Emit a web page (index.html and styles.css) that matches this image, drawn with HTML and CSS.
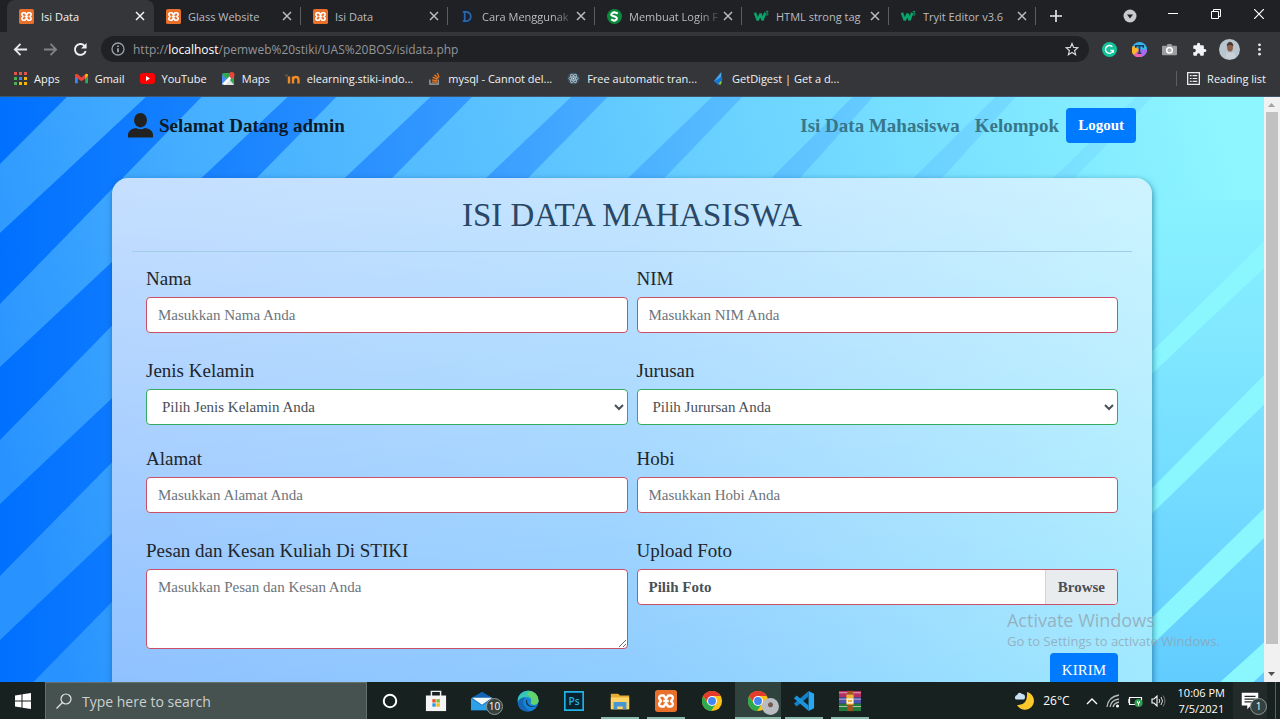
FILE: index.html
```html
<!DOCTYPE html>
<html lang="id">
<head>
<meta charset="utf-8">
<meta name="viewport" content="width=device-width, initial-scale=1">
<title>Isi Data</title>
<link rel="stylesheet" href="styles.css">
</head>
<body>
<svg class="defs" width="0" height="0" aria-hidden="true">
  <symbol id="xampp" viewBox="0 0 24 24"><rect width="24" height="24" rx="3" fill="#e9702a"/><path d="M9.500 6H7a2.500 2.500 0 0 0-2 4l1.500 2L5 14a2.500 2.500 0 0 0 2 4h2.500l2.500-3.500 2.500 3.500H17a2.500 2.500 0 0 0 2-4l-1.500-2L19 10a2.500 2.500 0 0 0-2-4h-2.500L12 9.500zM9 12h6" fill="none" stroke="#fff" stroke-width="2.600" stroke-linejoin="round"/></symbol>
  <symbol id="close" viewBox="0 0 10 10"><path d="M1 1l8 8M9 1L1 9" stroke="currentColor" stroke-width="1.500"/></symbol>
  <symbol id="w3" viewBox="0 0 16 16"><path d="M1 4l3 8 3-7 2 7 3-8" fill="none" stroke="#0aa46c" stroke-width="2.600" stroke-linejoin="bevel"/><path d="M12.500 2.500h2.500l-1.500 1.700q2 0 1.500 1.800-.8 1-2.300.2" fill="none" stroke="#0aa46c"/></symbol>
  <symbol id="chrome" viewBox="0 0 24 24"><circle cx="12" cy="12" r="11" fill="#fbc116"/><path d="M2.500 6.500A11 11 0 0 0 11 23l5.500-8.500L12 12 7 14z" fill="#2da94f"/><path d="M2.500 6.500A11 11 0 0 1 21.500 6.500H12L7.500 14z" fill="#e33b2e"/><circle cx="12" cy="12" r="5.500" fill="#fff"/><circle cx="12" cy="12" r="4.300" fill="#4285f4"/></symbol>
</svg>

<header class="browser">
  <div class="tabstrip">
    <div class="tab tab-active"><svg class="fav"><use href="#xampp"/></svg><span class="tab-title">Isi Data</span><button class="tab-close" aria-label="Close tab"><svg><use href="#close"/></svg></button></div>
    <div class="tab"><svg class="fav"><use href="#xampp"/></svg><span class="tab-title">Glass Website</span><button class="tab-close" aria-label="Close tab"><svg><use href="#close"/></svg></button></div>
    <div class="tab"><svg class="fav"><use href="#xampp"/></svg><span class="tab-title">Isi Data</span><button class="tab-close" aria-label="Close tab"><svg><use href="#close"/></svg></button></div>
    <div class="tab"><svg class="fav" viewBox="0 0 16 16"><rect width="12" height="16" x="1" fill="#182233"/><path d="M3 3h3.500q5 .5 5 5t-5 5H3M5 3v10" fill="none" stroke="#2e67a8" stroke-width="1.800"/></svg><span class="tab-title tab-title-fade">Cara Menggunak</span><button class="tab-close" aria-label="Close tab"><svg><use href="#close"/></svg></button></div>
    <div class="tab"><svg class="fav" viewBox="0 0 16 16"><circle cx="8" cy="8" r="8" fill="#0b8a3c"/><path d="M11.500 5Q8 2.500 5.500 4.500t1 3l3 1q2 1.500 0 3.200T4.500 11" fill="none" stroke="#fff" stroke-width="2.200"/></svg><span class="tab-title tab-title-fade">Membuat Login F</span><button class="tab-close" aria-label="Close tab"><svg><use href="#close"/></svg></button></div>
    <div class="tab"><svg class="fav"><use href="#w3"/></svg><span class="tab-title">HTML strong tag</span><button class="tab-close" aria-label="Close tab"><svg><use href="#close"/></svg></button></div>
    <div class="tab"><svg class="fav"><use href="#w3"/></svg><span class="tab-title">Tryit Editor v3.6</span><button class="tab-close" aria-label="Close tab"><svg><use href="#close"/></svg></button></div>
    <button class="new-tab" aria-label="New tab"><svg viewBox="0 0 12 12" width="12" height="12"><path d="M6 0v12M0 6h12" stroke="#e8eaed" stroke-width="1.600"/></svg></button>
    <div class="window-controls">
      <button aria-label="Search tabs"><svg viewBox="0 0 14 14" width="14" height="14"><circle cx="7" cy="7" r="6.500" fill="#c8cace"/><path d="M4 5.500h6L7 9.500z" fill="#202124"/></svg></button>
      <button aria-label="Minimize"><svg viewBox="0 0 10 10" width="10" height="10"><path d="M0 4.500h10" stroke="#fff"/></svg></button>
      <button aria-label="Restore"><svg viewBox="0 0 10 10" width="10" height="10"><path d="M.5 2.500h7v7h-7zM2.500 2.500v-2h7v7h-2" fill="none" stroke="#fff"/></svg></button>
      <button aria-label="Close window"><svg viewBox="0 0 10 10" width="10" height="10"><path d="M0 0l10 10M10 0L0 10" stroke="#fff" stroke-width="1.200"/></svg></button>
    </div>
  </div>
  <div class="toolbar">
    <button class="tool" aria-label="Back"><svg viewBox="0 0 16 16"><path d="M15 8H3M8 2L2 8l6 6" fill="none" stroke="#e8eaed" stroke-width="1.900"/></svg></button>
    <button class="tool" aria-label="Forward"><svg viewBox="0 0 16 16"><path d="M1 8h12M8 2l6 6-6 6" fill="none" stroke="#828387" stroke-width="1.900"/></svg></button>
    <button class="tool" aria-label="Reload"><svg viewBox="0 0 16 16"><path d="M13.500 9.500A5.800 5.800 0 1 1 12.200 4" fill="none" stroke="#f0f1f3" stroke-width="2"/><path d="M14.500 1v6h-6z" fill="#f0f1f3"/></svg></button>
    <div class="omnibox">
      <svg width="14" height="14" viewBox="0 0 14 14"><circle cx="7" cy="7" r="6" fill="none" stroke="#9aa0a6" stroke-width="1.300"/><path d="M7 6.200v4M7 3.500v1.500" stroke="#b8bbc0" stroke-width="1.500"/></svg>
      <span class="url">http://<b>localhost</b>/pemweb%20stiki/UAS%20BOS/isidata.php</span>
      <svg width="14" height="14" viewBox="0 0 24 24"><path d="M12 2.500l2.800 6.800 7.200.6-5.500 4.700 1.700 7.100L12 17.900l-6.200 3.800 1.700-7.100L2 9.900l7.200-.6z" fill="none" stroke="#d5d7da" stroke-width="2"/></svg>
    </div>
    <button class="tool" aria-label="Grammar"><svg viewBox="0 0 16 16"><circle cx="8" cy="8" r="8" fill="#15c39a"/><path d="M11 5A4.200 4.200 0 1 0 12 9H9M12 8.500v3" fill="none" stroke="#fff" stroke-width="1.500"/></svg></button>
    <button class="tool" aria-label="Fonts"><svg viewBox="0 0 16 16"><circle cx="8" cy="8" r="8" fill="#35b5e9"/><path d="M8 8L1 4a8 8 0 0 0 1 10z" fill="#ffb22c"/><path d="M8 8l-6 6a8 8 0 0 0 9 1.500z" fill="#f05fb2"/><path d="M8 8l3 7.500A8 8 0 0 0 16 8z" fill="#a66cf0"/><path d="M4 6V4h8v2M8 4v8M6 12h4" fill="none" stroke="#203a5c" stroke-width="1.700"/></svg></button>
    <button class="tool" aria-label="Screenshot"><svg viewBox="0 0 16 16"><path d="M1 4h4l1-2h4l1 2h4q1 0 1 1v8q0 1-1 1H1q-1 0-1-1V5q0-1 1-1z" fill="#9c9da0"/><circle cx="8" cy="8.800" r="3" fill="#aaa" stroke="#fff" stroke-width="1.600"/></svg></button>
    <button class="tool" aria-label="Extensions"><svg viewBox="0 0 24 24"><path d="M20.500 11H19V7a2 2 0 0 0-2-2h-4V3.500a2.500 2.500 0 0 0-5 0V5H4a2 2 0 0 0-2 2v3.800h1.500a2.700 2.700 0 0 1 0 5.400H2V20c0 1.100.9 2 2 2h3.800v-1.500a2.700 2.700 0 0 1 5.400 0V22H17a2 2 0 0 0 2-2v-4h1.500a2.500 2.500 0 0 0 0-5z" fill="#f1f3f4"/></svg></button>
    <button class="tool tool-avatar" aria-label="Profile"><svg viewBox="0 0 20 20"><circle cx="10" cy="10" r="10" fill="#b9c5cf"/><ellipse cx="10.500" cy="7.500" rx="2.800" ry="4.500" fill="#8a5f4b"/><path d="M7.500 5q3-5 6 0v2q-3-3-6 0z" fill="#493733"/><path d="M7 13h8l1 5q-5 2-10 0z" fill="#c8d1d8"/></svg></button>
    <button class="tool" aria-label="Menu"><svg viewBox="0 0 16 16"><g fill="#e8eaed"><circle cx="8" cy="3" r="1.500"/><circle cx="8" cy="8" r="1.500"/><circle cx="8" cy="13" r="1.500"/></g></svg></button>
  </div>
  <nav class="bookmarks" aria-label="Bookmarks">
    <a href="#"><svg viewBox="0 0 13 13"><path d="M0 0h3v3H0zM5 0h3v3H5zM10 0h3v3h-3z" fill="#e5544b"/><path d="M0 5h3v3H0z" fill="#4caf50"/><path d="M5 5h3v3H5z" fill="#4285f4"/><path d="M10 5h3v3h-3z" fill="#f5b400"/><path d="M0 10h3v3H0z" fill="#4caf50"/><path d="M5 10h3v3H5zM10 10h3v3h-3z" fill="#f5b400"/></svg>Apps</a>
    <a href="#"><svg viewBox="0 0 14 12"><path d="M0 2v9h3V4z" fill="#4285f4"/><path d="M14 2v9h-3V4z" fill="#34a853"/><path d="M0 2q1-2 3-.5L7 5l4-3.500Q13 0 14 2v2L7 9 0 4z" fill="#ea4335"/><path d="M11 1.500Q14 0 14 3l-3 3z" fill="#fbbc04"/></svg>Gmail</a>
    <a href="#"><svg class="wide" viewBox="0 0 15 12"><rect width="15" height="11" y=".5" rx="3" fill="#f00"/><path d="M6 3.500l4 2.500-4 2.500z" fill="#fff"/></svg>YouTube</a>
    <a href="#"><svg viewBox="0 0 14 14"><rect y="1" width="13" height="13" rx="2" fill="#35a853"/><path d="M0 3l6 5-6 6z" fill="#4b8df6"/><path d="M2 14l6-6 5 6z" fill="#dfe3e7"/><path d="M0 13L10 3l2 2-9 9z" fill="#fff"/><path d="M10.500 8Q7 4 7.500 3a3 3 0 0 1 6 0q0 1.500-3 5z" fill="#e8453c"/></svg>Maps</a>
    <a href="#"><svg class="wide" viewBox="0 0 15 12"><path d="M0 3h3" stroke="#68503d" stroke-width="2"/><path d="M4 4v7M8 11V4M8 7q1-3 3-2.500 2.500 0 2.500 3V11" fill="none" stroke="#f08a24" stroke-width="2.400"/></svg>elearning.stiki-indo...</a>
    <a href="#"><svg viewBox="0 0 14 14"><path d="M2 8v5h9V8" fill="none" stroke="#a9aaac" stroke-width="1.300"/><path d="M4 11h5.500M4.200 8.500l5.500 1M5 5.500l5 2.500M7 3l4 4M10 1l2 5" stroke="#e87922" stroke-width="1.400"/></svg>mysql - Cannot del...</a>
    <a href="#"><svg viewBox="0 0 14 14"><circle cx="7" cy="7" r="6.500" fill="#3a5361"/><g fill="none" stroke="#a9bbc6"><ellipse cx="7" cy="7" rx="5" ry="2"/><ellipse cx="7" cy="7" rx="5" ry="2" transform="rotate(60 7 7)"/><ellipse cx="7" cy="7" rx="5" ry="2" transform="rotate(120 7 7)"/></g><circle cx="7" cy="7" r="1" fill="#d6e2ea"/></svg>Free automatic tran...</a>
    <a href="#"><svg viewBox="0 0 14 14"><path d="M10 0v5L5 9.500 2 10z" fill="#43a9f5"/><path d="M2 10l9-5v4L7 14z" fill="#1775d1"/><path d="M9 10l2 .5-2 3.500-2-1z" fill="#86c440"/></svg>GetDigest | Get a d...</a>
    <button class="reading"><svg viewBox="0 0 14 14"><path d="M.7.7h12.600v12.600H.7z" fill="none" stroke="#e8eaed" stroke-width="1.400"/><path d="M3 4h2M3 7h2M3 10h2M6 4h5M6 7h5M6 10h5" stroke="#e8eaed" stroke-width="1.300"/></svg>Reading list</button>
  </nav>
</header>

<div class="viewport">
  <svg class="backdrop" viewBox="0 97 1264 585" preserveAspectRatio="none" aria-hidden="true">
    <defs>
      <linearGradient id="base" gradientUnits="userSpaceOnUse" x1="0" y1="450" x2="1200" y2="97"><stop offset="0" stop-color="#2893ff"/><stop offset=".2" stop-color="#44adff"/><stop offset=".5" stop-color="#5fc6ff"/><stop offset="1" stop-color="#8df6ff"/></linearGradient>
      <linearGradient id="dark" gradientUnits="userSpaceOnUse" x1="0" y1="0" x2="1140" y2="0"><stop offset="0" stop-color="#0070ff"/><stop offset=".2" stop-color="#1a84ff"/><stop offset=".4" stop-color="#359aff"/><stop offset=".6" stop-color="#53b8ff"/><stop offset="1" stop-color="#82e9ff"/></linearGradient>
      <linearGradient id="right" x1="0" y1="0" x2="0" y2="1"><stop offset="0" stop-color="#88f2ff"/><stop offset=".3" stop-color="#80e7ff"/><stop offset="1" stop-color="#62ccff"/></linearGradient>
    </defs>
    <path d="M0 97h1264v585H0z" fill="url(#base)"/>
    <path d="M1130 200h134v482h-134z" fill="url(#right)"/>
    <path fill="url(#dark)" d="M0 97h66L0 164zM144 97h55L0 304v-71zM284 97h48L0 440v-73zM425 97h41L0 576v-72zM564 97h36L0 716v-76zM703 97h30L640 195H603zM842 97h20L775 195H745zM983 97h20L915 195H885zM1122 97h16L1045 195H1023z"/>
    <path fill="#8af7ff" d="M1264 226v27l-134 128v-22zM1264 359v30l-134 132v-25zM1264 493v30L1130 652v-27zM1264 628v29l-26 25h-33z"/>
  </svg>
  <div class="page">
    <div class="navbar">
      <a class="brand" href="#"><svg viewBox="0 0 25 25" width="25" height="25"><ellipse cx="12.500" cy="7.200" rx="6.500" ry="7.200" fill="#222"/><path d="M8 15q4.500 2.500 9 0 7 1 8 6v3.500H0V21q1-5 8-6z" fill="#222"/></svg>Selamat Datang admin</a>
      <nav class="nav-links">
        <a href="#">Isi Data Mahasiswa</a>
        <a href="#">Kelompok</a>
        <button class="btn">Logout</button>
      </nav>
    </div>
    <main class="card">
      <h1>ISI DATA MAHASISWA</h1>
      <form class="form" onsubmit="return false">
        <div class="field"><label for="nama">Nama</label><input id="nama" class="control" type="text" placeholder="Masukkan Nama Anda"></div>
        <div class="field"><label for="nim">NIM</label><input id="nim" class="control" type="text" placeholder="Masukkan NIM Anda"></div>
        <div class="field field-tight"><label for="jk">Jenis Kelamin</label><select id="jk" class="control control-valid"><option>Pilih Jenis Kelamin Anda</option></select></div>
        <div class="field field-tight"><label for="jurusan">Jurusan</label><select id="jurusan" class="control control-valid"><option>Pilih Jurursan Anda</option></select></div>
        <div class="field"><label for="alamat">Alamat</label><input id="alamat" class="control" type="text" placeholder="Masukkan Alamat Anda"></div>
        <div class="field"><label for="hobi">Hobi</label><input id="hobi" class="control" type="text" placeholder="Masukkan Hobi Anda"></div>
        <div class="field field-last"><label for="pesan">Pesan dan Kesan Kuliah Di STIKI</label><textarea id="pesan" class="control control-area" placeholder="Masukkan Pesan dan Kesan Anda"></textarea></div>
        <div class="field field-last"><label for="foto">Upload Foto</label><label class="control file" for="foto"><span>Pilih Foto</span><span class="browse">Browse</span></label><input id="foto" class="file-input" type="file"></div>
        <div class="actions"><button class="btn" type="submit">KIRIM</button></div>
      </form>
    </main>
  </div>
  <div class="scrollbar" aria-hidden="true">
    <svg viewBox="0 0 15 15"><path d="M4 10h7L7.500 6z" fill="#a3a3a3"/></svg>
    <div class="thumb"></div>
    <svg viewBox="0 0 15 15"><path d="M4 5h7L7.500 9z" fill="#505050"/></svg>
  </div>
  <div class="watermark"><p class="wm-title">Activate Windows</p><p>Go to Settings to activate Windows.</p></div>
</div>

<footer class="taskbar">
  <button class="start" aria-label="Start"><svg viewBox="0 0 16 16" width="16" height="16"><path d="M0 2.500l6.500-1v6H0zM7.500 1.300L16 0v7.500H7.500zM0 8.500h6.500v6l-6.500-1zM7.500 8.500H16V16l-8.500-1.300z" fill="#fff"/></svg></button>
  <label class="search"><svg viewBox="0 0 16 16" width="16" height="16"><circle cx="10" cy="6" r="5" fill="none" stroke="#e4e6e6" stroke-width="1.200"/><path d="M6.500 9.500L.5 15.500" stroke="#e4e6e6" stroke-width="1.200"/></svg><input type="text" aria-label="Search" placeholder="Type here to search"></label>
  <div class="apps">
    <button class="app" aria-label="Cortana"><svg viewBox="0 0 24 24"><circle cx="12" cy="12" r="6.800" fill="none" stroke="#fff" stroke-width="2.200"/></svg></button>
    <button class="app" aria-label="Store"><svg viewBox="0 0 24 24"><path d="M7 7V1.500h10V7" fill="none" stroke="#eee" stroke-width="1.600"/><path d="M1 6h22v17H1z" fill="#f5f5f5"/><path d="M8 10h3.700v3.700H8z" fill="#e8542c"/><path d="M12.500 10h3.700v3.700h-3.700z" fill="#7eb72d"/><path d="M8 14.500h3.700v3.700H8z" fill="#2b9fe5"/><path d="M12.500 14.500h3.700v3.700h-3.700z" fill="#f7b916"/></svg></button>
    <button class="app" aria-label="Mail"><svg viewBox="0 0 24 24"><path d="M0 9l12-7 12 7v13H0z" fill="#1265b4"/><path d="M0 9l12 8 12-8v13H0z" fill="#2ca0e8"/><path d="M1 8.500h22L12 16z" fill="#f5f8fa"/></svg><span class="badge">10</span></button>
    <button class="app" aria-label="Edge"><svg viewBox="0 0 24 24"><circle cx="12" cy="12" r="11.500" fill="#1683d8"/><path d="M1 9A11.500 11.500 0 0 1 23.500 12q0 4-5 4-4-.2-3-3 1-4-4-5Q5 7 1 12z" fill="#38c6b4"/><path d="M14 1q10 2 9.500 11-1 4-6 4-4-.5-2-4 1-5-5-7z" fill="#63d469"/><path d="M10 8q-4 2-3 7 2 6 8 8-11 2-14-7 0-8 9-8z" fill="#1566b5"/><path d="M11 10q-1 7 6 8 3 0 5-1-2 2-6 1.500-6-1-6-6 0-1.500 1-2.500z" fill="#17211f"/></svg></button>
    <button class="app" aria-label="Photoshop"><svg class="ps" viewBox="0 0 24 24"><path d="M2 2h20v20H2z" fill="#08232f" stroke="#20b4e8" stroke-width="1.800"/><text x="12" y="16" text-anchor="middle">Ps</text></svg></button>
    <button class="app app-open" aria-label="File Explorer"><svg viewBox="0 0 24 24"><path d="M2 4h8l2 2h10v15H2z" fill="#e7ad32"/><path d="M2 8h20v13H2z" fill="#fcd364"/><path d="M5 21v-8h14v8h-4v-3H9v3z" fill="#4597d4"/></svg></button>
    <button class="app app-open" aria-label="XAMPP"><svg><use href="#xampp"/></svg></button>
    <button class="app" aria-label="Chrome"><svg><use href="#chrome"/></svg></button>
    <button class="app app-open app-active" aria-label="Chrome profile"><svg><use href="#chrome"/></svg><span class="badge badge-face"></span></button>
    <button class="app app-open" aria-label="Visual Studio Code"><svg viewBox="0 0 24 24"><path d="M17 1l6 3v16l-6 3z" fill="#2aa7f1"/><path d="M17 1v6L4 18l-3-3z" fill="#1480c9"/><path d="M17 23v-6L4 6 1 9z" fill="#1b94dd"/></svg></button>
    <button class="app app-open" aria-label="WinRAR"><svg viewBox="0 0 24 24"><path d="M0 1h24v7H0z" fill="#b62d63"/><path d="M0 8h24v7H0z" fill="#4c54ad"/><path d="M0 15h24v8H0z" fill="#247a3c"/><path d="M0 3h24M0 10h24M0 18h24" stroke="#e6d8ce" stroke-width=".8"/><path d="M9 1h6v22H9z" fill="#a45120"/><path d="M8 5h8v11H8z" fill="#eab33c"/><path d="M9 10h6v4H9z" fill="none" stroke="#fff" stroke-width="1.200"/></svg></button>
  </div>
  <div class="tray">
    <svg width="20" height="20" viewBox="0 0 20 20"><path d="M12 1a9 9 0 1 1-10 13Q13 15 12 1z" fill="#fcc92c"/><path d="M1 8.500a2.500 2.500 0 0 1 1-4.500q2-4 5-1 3 0 3 3t-2 2.500z" fill="#c9e1f5"/></svg>
    <span class="temp">26°C</span>
    <svg width="12" height="12" viewBox="0 0 12 12"><path d="M1 9l5-5 5 5" fill="none" stroke="#fff" stroke-width="1.300"/></svg>
    <svg width="14" height="14" viewBox="0 0 14 14"><path d="M1 13Q2 3 13 1M4 13q1-7 9-8M7 13q1-4 6-5" fill="none" stroke="#b7bbba" stroke-width="1.300"/><circle cx="11.500" cy="12" r="1.500" fill="#fff"/></svg>
    <svg width="15" height="14" viewBox="0 0 15 14"><path d="M1.500 3.500h12v7h-12zM0 5v4" fill="none" stroke="#fff" stroke-width="1.200"/><circle cx="10.500" cy="9" r="4" fill="#2aa14a"/><path d="M9.500 7v2h2V7M10.500 9v2.500" fill="none" stroke="#fff"/></svg>
    <svg width="15" height="14" viewBox="0 0 15 14"><path d="M1 5h2l3-3v10L3 9H1z" fill="none" stroke="#fff" stroke-width="1.100"/><path d="M8 5q1.500 2 0 4M10 3q3 4 0 8" fill="none" stroke="#ddd"/><path d="M12 1.500q4 5.500 0 11" fill="none" stroke="#777"/></svg>
    <div class="clock"><span>10:06 PM</span><span>7/5/2021</span></div>
    <button class="app notify" aria-label="Notifications"><svg viewBox="0 0 24 24"><path d="M3 3h18v14h-8l-4 4v-4H3z" fill="#fff"/><path d="M6 7h12M6 10h12M6 13h8" stroke="#222b29" stroke-width="1.300"/></svg><span class="badge">1</span></button>
    <span class="show-desktop"></span>
  </div>
</footer>
</body>
</html>
```
FILE: styles.css
```css
* { box-sizing: border-box; }
body {
  margin: 0;
  height: 100vh;
  display: flex;
  flex-direction: column;
  overflow: hidden;
  font-family: "Open Sans", "Noto Sans", sans-serif;
  font-size: 11px;
  color: #e8eaed;
}
button { border: 0; padding: 0; background: none; color: inherit; font: inherit; }
a { color: inherit; text-decoration: none; }
.defs { position: absolute; }

/* Browser chrome */
.browser { flex: none; background: #35363a; border-bottom: 1px solid #40556a; }
.tabstrip { display: flex; height: 32px; padding-left: 7px; background: #202124; }
.tab {
  flex: 0 1 147px;
  display: flex;
  align-items: center;
  min-width: 0;
  padding: 0 9px 0 12px;
  color: #b9bcc0;
  background: linear-gradient(#5b5d61, #5b5d61) right center / 1px 18px no-repeat;
}
.tab-active { background: #35363a; border-radius: 8px 8px 0 0; color: #f1f3f4; }
.fav { flex: none; width: 15px; height: 15px; margin-right: 7px; }
.tab-title { flex: 1; overflow: hidden; white-space: nowrap; }
.tab-title-fade { mask-image: linear-gradient(to right, #000 75%, transparent); }
.tab-close { display: flex; }
.tab-close svg { width: 10px; height: 10px; }
.new-tab { width: 40px; display: flex; align-items: center; justify-content: center; }
.window-controls { margin-left: auto; display: flex; align-items: center; padding-bottom: 4px; }
.window-controls button { width: 43px; display: flex; justify-content: center; }
.window-controls button:first-child { padding-top: 4px; }

.toolbar { display: flex; align-items: center; height: 34px; padding: 0 6px 0 5px; }
.tool { width: 30px; display: flex; justify-content: center; }
.tool svg { width: 15px; height: 15px; }
.tool-avatar svg { width: 21px; height: 21px; }
.omnibox {
  flex: 1;
  display: flex;
  align-items: center;
  gap: 8px;
  height: 26px;
  margin: 0 5px 0 6px;
  padding: 0 10px;
  border-radius: 13px;
  background: #202124;
}
.url { flex: 1; font-size: 12px; color: #92969b; white-space: nowrap; }
.url b { font-weight: 400; color: #fff; }

.bookmarks { display: flex; align-items: center; gap: 15px; height: 30px; padding: 0 14px 5px; white-space: nowrap; }
.bookmarks a, .reading { display: flex; align-items: center; gap: 7px; color: #f1f3f4; }
.bookmarks svg { flex: none; width: 13px; height: 13px; }
.bookmarks .wide { width: 15px; }
.reading { margin-left: auto; padding-left: 10px; border-left: 1px solid #5b5d61; }

/* Web page */
.viewport { position: relative; flex: 1; min-height: 0; display: flex; font-family: "Liberation Serif", "Times New Roman", serif; }
.backdrop { position: absolute; inset: 0; width: 100%; height: 100%; }
.page { position: relative; flex: 1; overflow-y: auto; scrollbar-width: none; color: #212529; font-size: 15px; }
.navbar {
  display: flex;
  align-items: center;
  justify-content: space-between;
  max-width: 1008px;
  margin: 0 auto;
  padding: 11px 0 35px;
  font-size: 19px;
  font-weight: 700;
}
.brand { display: flex; align-items: center; gap: 6px; color: #0a1a2a; }
.nav-links { display: flex; align-items: center; gap: 15px; color: #38768a; }
.btn {
  height: 35px;
  padding: 0 12px;
  border-radius: 4px;
  background: #007bff;
  color: #fff;
  font-size: 15px;
}
.nav-links .btn { margin-left: -8px; }
.card {
  max-width: 1040px;
  margin: 0 auto;
  padding: 16px 20px 32px;
  border-radius: 16px;
  background:
    linear-gradient(to bottom, rgba(255, 255, 255, .5), rgba(255, 255, 255, .3) 40%, rgba(255, 255, 255, 0)),
    linear-gradient(to right, #8cbfff, #8acbff 50%, #9ce8ff);
  box-shadow: 1px 2px 6px rgba(0, 80, 120, .6);
}
h1 {
  margin: 0 0 15px;
  padding-bottom: 14px;
  border-bottom: 1px solid #a3cde4;
  color: #2a4866;
  font-size: 33px;
  font-weight: 400;
  line-height: 43px;
  text-align: center;
}
.form { display: grid; grid-template-columns: 1fr 1fr; column-gap: 9px; padding: 0 14px; }
.field { display: flex; flex-direction: column; align-items: stretch; gap: 6px; padding-bottom: 26px; font-size: 19px; line-height: 24px; }
.field label:first-child { align-self: flex-start; }
.field-tight { padding-bottom: 22px; }
.field-last { padding-bottom: 4px; }
.control {
  width: 100%;
  height: 36px;
  padding: 0 11px;
  border: 1px solid #ca5068;
  border-radius: 4px;
  background: #fff;
  color: #495057;
  font-family: inherit;
  font-size: 15px;
  line-height: 22px;
}
.control::placeholder { color: #6c757d; opacity: 1; }
.control-valid { border-color: #35ab61; }
.control-area { height: 80px; padding: 6px 11px; resize: vertical; display: block; }
.file { display: flex; align-items: center; justify-content: space-between; padding-right: 0; font-weight: 700; overflow: hidden; }
.browse { height: 34px; padding: 0 12px; border-left: 1px solid #ced4da; background: #e9ecef; line-height: 34px; }
.file-input { position: absolute; width: 1px; height: 1px; opacity: 0; }
.actions { grid-column: 1 / -1; display: flex; justify-content: flex-end; }

.scrollbar { position: relative; width: 16px; display: flex; flex-direction: column; background: #f1f1f1; }
.scrollbar svg { flex: none; width: 15px; height: 15px; }
.thumb { height: 91%; margin: 0 2px auto; align-self: stretch; background: #c1c1c1; }
.watermark {
  position: absolute;
  right: 60px;
  bottom: 32px;
  color: rgba(145, 160, 172, .75);
  font-family: "Open Sans", "Noto Sans", sans-serif;
  font-size: 13px;
  line-height: 18px;
  pointer-events: none;
}
.watermark p { margin: 0; }
.watermark .wm-title { font-size: 18px; line-height: 24px; }

/* Taskbar */
.taskbar { flex: none; display: flex; height: 37px; background: #17211f; color: #fff; }
.start { width: 45px; display: flex; align-items: center; justify-content: center; }
.search { flex: 0 1 322px; display: flex; align-items: center; gap: 10px; padding: 0 10px; background: #46524f; border: 1px solid #66716e; border-bottom: 0; }
.search input { flex: 1; min-width: 0; padding: 0; border: 0; outline: 0; background: none; color: #fff; font: 14px "Open Sans", "Noto Sans", sans-serif; }
.search input::placeholder { color: #ccd0cf; opacity: 1; }
.apps { display: flex; }
.app { position: relative; width: 46px; display: flex; align-items: center; justify-content: center; }
.app svg { width: 22px; height: 22px; }
.ps text { fill: #20b4e8; font-size: 11px; font-weight: 600; }
.app-open::after { content: ""; position: absolute; left: 4px; right: 4px; bottom: 0; height: 2px; background: #8cb9a9; }
.app-active { background: #2f423d; }
.app-active::after { left: 0; right: 0; }
.badge {
  position: absolute;
  left: 27px;
  top: 16px;
  width: 17px;
  height: 17px;
  border: 1px solid #8e9694;
  border-radius: 50%;
  background: #35413e;
  font-size: 10px;
  line-height: 15px;
  text-align: center;
}
.badge-face { background: radial-gradient(circle at 50% 40%, #795c50 2px, #b9bdc3 3px); border: 0; }
.tray { margin-left: auto; display: flex; align-items: center; gap: 8px; }
.temp { margin-right: 8px; font-size: 12px; }
.clock { display: flex; flex-direction: column; align-items: center; padding-left: 4px; line-height: 16px; }
.notify { width: 34px; align-self: stretch; background: #222b29; }
.notify .badge { left: 17px; }
.show-desktop { align-self: stretch; width: 5px; border-left: 1px solid #58605e; }
```
